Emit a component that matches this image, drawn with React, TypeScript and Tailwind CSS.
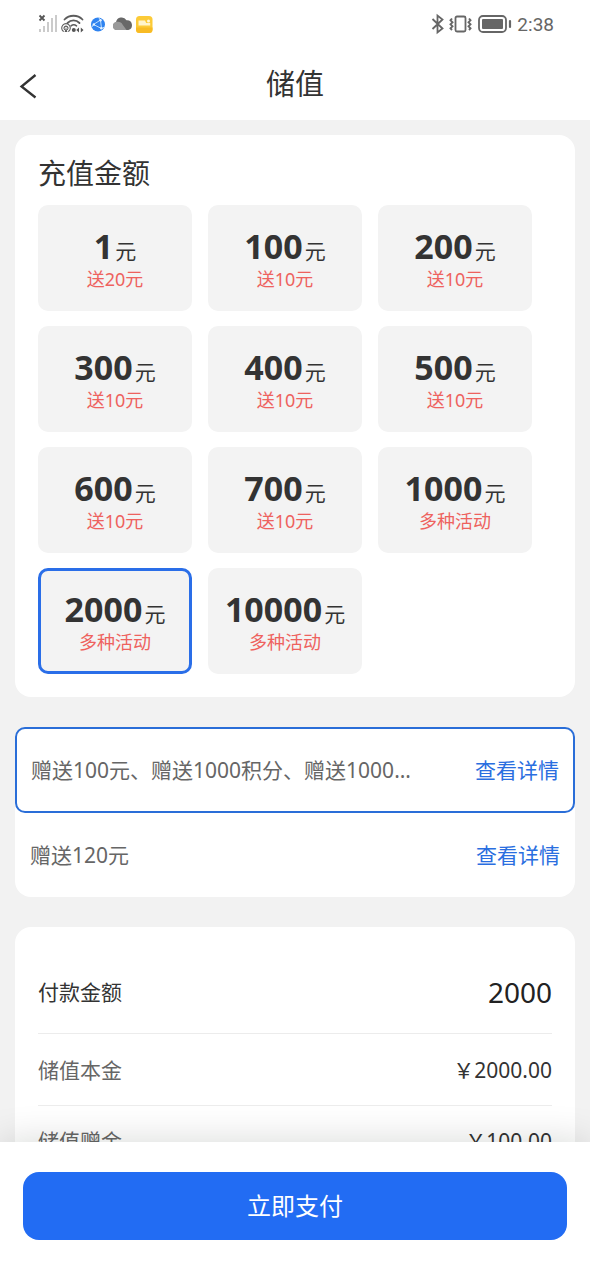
import { useState } from "react";

const amounts = [
  { value: 1, note: "送20元" },
  { value: 100, note: "送10元" },
  { value: 200, note: "送10元" },
  { value: 300, note: "送10元" },
  { value: 400, note: "送10元" },
  { value: 500, note: "送10元" },
  { value: 600, note: "送10元" },
  { value: 700, note: "送10元" },
  { value: 1000, note: "多种活动" },
  { value: 2000, note: "多种活动" },
  { value: 10000, note: "多种活动" },
];

const offers = ["赠送100元、赠送1000积分、赠送1000…", "赠送120元"];

function SignalIcons() {
  return (
    <svg width="118" height="24" viewBox="0 0 118 24" fill="none" aria-hidden="true">
      <path d="M1.500 3.500l5 5M6.500 3.500l-5 5" stroke="#555" strokeWidth="1.800" />
      <g fill="#cbcbcb">
        <rect x="1" y="17" width="2" height="3" />
        <rect x="5" y="14" width="2" height="6" />
        <rect x="9" y="10" width="2" height="10" />
        <rect x="13" y="6" width="2" height="14" />
        <rect x="17" y="3" width="2" height="17" />
      </g>
      <g stroke="#5c5c5c" strokeLinecap="round">
        <path d="M26.500 7.500c4.800-5 13.200-5 18 0" strokeWidth="1.800" />
        <path d="M29.500 11c3.400-3.500 8.600-3.500 12 0" strokeWidth="1.800" />
        <path d="M33 13.800c1.800-1.300 3.700-1.300 5.500 0" strokeWidth="1.600" />
        <path d="M25.300 19.300a4.300 4.300 0 1 1 5.400 0M26.500 17.500a2 2 0 1 1 3 0" strokeWidth="1.100" />
      </g>
      <path d="M28 15l1.400 5h-2.800z" fill="#5c5c5c" />
      <circle cx="35.800" cy="18" r="2" fill="#555" />
      <path d="M41 15.500v5l-2.700-2.500zM42.800 15.500v5l2.700-2.500z" fill="#555" />
      <circle cx="60" cy="12.500" r="7" fill="#2f83f0" />
      <path d="M55.500 12.500l7-4.500 1 8.500zM62.500 8l-2-2.500M63.500 16.500l3-1.500M55.500 12.500l-2 3" stroke="#bfdfff" strokeWidth="1" />
      <circle cx="55.800" cy="12.500" r="1.200" fill="#e6f3ff" />
      <circle cx="62.500" cy="8.300" r="1.200" fill="#e6f3ff" />
      <circle cx="63.300" cy="16.300" r="1.200" fill="#e6f3ff" />
      <path d="M78.500 18a4 4 0 0 1-.5-7.800 5.700 5.700 0 0 1 10.500-2 5 5 0 0 1 1.800 9.800z" fill="#686868" />
      <path d="M78.500 18a4 4 0 0 1-.3-7.900c3-.8 5.300.4 6.300 2.400L88.500 18z" fill="#999" />
      <rect x="98" y="4" width="16.500" height="17" rx="3.500" fill="#fccb38" />
      <path d="M98 15.500h16.500v2a3.500 3.500 0 0 1-3.500 3.500h-9.500a3.500 3.500 0 0 1-3.500-3.500z" fill="#f8bb24" />
      <path d="M100.500 8.500h6.500l1.200 2.500h4v2.500h-11.700z" fill="#fff4cc" />
      <circle cx="110.500" cy="9" r="1.500" fill="#fff7dd" />
    </svg>
  );
}

function DeviceIcons() {
  return (
    <svg width="82" height="24" viewBox="0 0 82 24" fill="none" stroke="#666" aria-hidden="true">
      <path d="M1.500 7l10 9.500-5 4v-17l5 4-10 9.500" strokeWidth="1.800" />
      <rect x="24.500" y="4.500" width="10" height="15" rx="1.500" strokeWidth="1.800" />
      <path d="M21 6.500l-1.500 1.800 2 2-2 2 2 2-2 2 1.500 1.700M38 6.500l1.500 1.800-2 2 2 2-2 2 2 2-1.500 1.700" strokeWidth="1.900" />
      <rect x="48" y="4" width="27" height="16" rx="4" strokeWidth="1.800" />
      <rect x="51" y="7" width="21" height="10" rx="1" fill="#666" stroke="none" />
      <path d="M79 9v6" strokeWidth="2.200" strokeLinecap="round" />
    </svg>
  );
}

export default function App() {
  const [selected, setSelected] = useState(2000);
  const [offer, setOffer] = useState(0);

  return (
    <div className="flex h-screen flex-col overflow-hidden bg-[#f2f2f2] font-['Noto_Sans','Noto_Sans_CJK_SC',sans-serif] text-[#333]">
      <header className="shrink-0 bg-white">
        <div className="flex h-12 items-center justify-between pr-9 pl-[38px]">
          <SignalIcons />
          <div className="flex items-center gap-1">
            <DeviceIcons />
            <span className="pt-0.5 font-[Roboto,sans-serif] text-[19px] leading-6 text-[#666]">2:38</span>
          </div>
        </div>
        <div className="grid h-[72px] grid-cols-[1fr_auto_1fr] items-center px-4">
          <button type="button" aria-label="返回" className="w-6 pt-1">
            <svg width="24" height="28" viewBox="0 0 24 28" fill="none" aria-hidden="true">
              <path d="M19.500 3L5.500 14.500l14 11" stroke="#333" strokeWidth="2.300" />
            </svg>
          </button>
          <h1 className="text-[29px] leading-10">储值</h1>
        </div>
      </header>

      <main className="min-h-0 flex-1 overflow-hidden px-[15px] pt-[15px]">
        <section className="rounded-2xl bg-white px-[23px] pt-[18px] pb-[23px]">
          <h2 className="text-[28px] leading-10">充值金额</h2>
          <div className="mt-3 grid grid-cols-3 gap-x-4 gap-y-[15px] pr-5">
            {amounts.map(({ value, note }) => (
              <button
                key={value}
                type="button"
                aria-pressed={selected === value}
                onClick={() => setSelected(value)}
                className={`flex h-[106px] flex-col items-center justify-center rounded-[10px] border-3 bg-[#f3f3f3] ${selected === value ? "border-[#2a6ee8]" : "border-transparent"}`}
              >
                <span className="flex items-baseline gap-0.5 leading-9">
                  <b className="text-[34px] font-bold">{value}</b>
                  <span className="text-[21px]">元</span>
                </span>
                <span className="text-[18px] leading-5 text-[#ee625e]">{note}</span>
              </button>
            ))}
          </div>
        </section>

        <section className="mt-[30px] rounded-2xl bg-white text-[21px] leading-8">
          {offers.map((text, index) => (
            <div
              key={text}
              className={`flex items-center justify-between gap-6 ${offer === index ? "h-[86px] rounded-[10px] border-2 border-[#2a6ed8] px-[14px]" : "h-[84px] px-[15px]"}`}
            >
              <label className="min-w-0 flex-1 truncate text-[#666]">
                <input
                  type="radio"
                  name="offer"
                  checked={offer === index}
                  onChange={() => setOffer(index)}
                  className="sr-only"
                />
                {text}
              </label>
              <button type="button" className="shrink-0 text-[#2a6ee0]">
                查看详情
              </button>
            </div>
          ))}
        </section>

        <section className="mt-[30px] rounded-2xl bg-white px-[23px] pt-[23px] text-[21px] leading-8">
          <dl>
            <div className="flex h-[84px] items-center justify-between border-b border-[#ececec]">
              <dt>付款金额</dt>
              <dd className="text-[28px] text-[#222]">2000</dd>
            </div>
            <div className="flex h-[72px] items-center justify-between border-b border-[#ececec]">
              <dt className="text-[#666]">储值本金</dt>
              <dd>￥2000.00</dd>
            </div>
            <div className="flex h-[70px] items-center justify-between">
              <dt className="text-[#666]">储值赠金</dt>
              <dd>￥100.00</dd>
            </div>
          </dl>
        </section>
      </main>

      <footer className="relative shrink-0 bg-white px-[23px] pt-[30px] pb-[38px] shadow-[0_0_36px_rgba(0,20,10,0.16)]">
        <button type="button" className="h-[68px] w-full rounded-2xl bg-[#226cf3] text-[24px] leading-8 text-white">
          立即支付
        </button>
      </footer>
    </div>
  );
}
